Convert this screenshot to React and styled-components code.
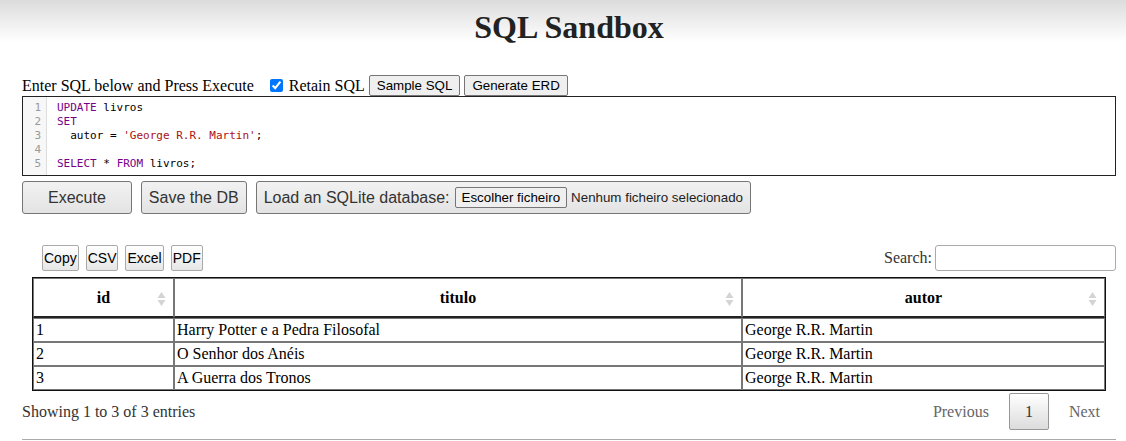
import React from "react";
import styled, { createGlobalStyle } from "styled-components";

const GlobalStyle = createGlobalStyle`
  body {
    margin: 0;
    font-family: "Liberation Serif", "Times New Roman", serif;
    font-size: 16px;
    color: #000;
    background: #fff;
  }
`;

const Header = styled.header`
  height: 52px;
  background: linear-gradient(#dcdcdc, #fff 42px);
  display: flex;
  justify-content: center;
  align-items: flex-start;
  padding-left: 12px;
`;

const Title = styled.h1`
  margin: 9px 0 0;
  font-size: 32px;
  font-weight: bold;
  color: #222;
`;

const Main = styled.main`
  padding: 23px 10px 0 22px;
`;

const IntroBar = styled.div`
  display: flex;
  align-items: center;
  height: 21px;
`;

const Check = styled.input`
  margin: 0 6px 0 16px;
  width: 13px;
  height: 13px;
  accent-color: #0075ff;
`;

const SmallButton = styled.button`
  font-family: "Liberation Sans", Arial, sans-serif;
  font-size: 13.33px;
  height: 21px;
  padding: 0 7px;
  margin-left: ${(p) => p.$gap || 0}px;
  border: 1px solid #767676;
  border-radius: 2px;
  background: #efefef;
  color: #000;
`;

const Editor = styled.div`
  display: flex;
  border: 1px solid #222;
  height: 78px;
  font-family: "DejaVu Sans Mono", monospace;
  font-size: 11px;
  line-height: 14px;
  background: #fff;
`;

const Gutter = styled.div`
  width: 24px;
  background: #f7f7f7;
  border-right: 1px solid #ddd;
  color: #999;
  text-align: right;
  padding: 4px 5px 0 0;
  box-sizing: border-box;
`;

const Code = styled.pre`
  margin: 0;
  padding: 4px 0 0 10px;
  font: inherit;
  color: #000;
`;

const Kw = styled.span`
  color: #708;
`;

const Str = styled.span`
  color: #a11;
`;

const ActionRow = styled.div`
  display: flex;
  gap: 9px;
  margin-top: 5px;
`;

const BigButton = styled.div`
  display: flex;
  align-items: center;
  height: 33px;
  box-sizing: border-box;
  padding: 0 ${(p) => p.$pad}px;
  border: 1px solid #767676;
  border-radius: 3px;
  background: linear-gradient(#f2f2f2, #e3e3e3);
  font-family: "Liberation Sans", Arial, sans-serif;
  font-size: 16px;
  color: #333;
`;

const FileButton = styled.span`
  margin-left: 5px;
  height: 21px;
  box-sizing: border-box;
  display: inline-flex;
  align-items: center;
  padding: 0 6px;
  border: 1px solid #767676;
  border-radius: 2px;
  background: #efefef;
  font-size: 13.33px;
  color: #000;
`;

const FileLabel = styled.span`
  margin-left: 4px;
  font-size: 13.33px;
  color: #222;
`;

const TableArea = styled.section`
  margin-top: 31px;
  padding: 0 10px;
`;

const Toolbar = styled.div`
  display: flex;
  align-items: center;
  justify-content: space-between;
  padding-left: 10px;
  height: 26px;
`;

const ExportGroup = styled.div`
  display: flex;
  gap: 7px;
`;

const ExportButton = styled.button`
  height: 26px;
  padding: 0 1px;
  font-family: "Liberation Sans", Arial, sans-serif;
  font-size: 14px;
  color: #000;
  border: 1px solid #aaa;
  border-radius: 2px;
  background: linear-gradient(#fff, #e6e6e6);
`;

const SearchLabel = styled.label`
  display: flex;
  align-items: center;
  gap: 3px;
  margin-right: -10px;
  color: #333;
`;

const SearchInput = styled.input`
  width: 181px;
  height: 26px;
  box-sizing: border-box;
  border: 1px solid #aaa;
  border-radius: 3px;
  padding: 0 4px;
`;

const Table = styled.table`
  width: 100%;
  table-layout: fixed;
  margin-top: 6px;
  border-collapse: separate;
  border-spacing: 0;
  border: 1px solid #111;
`;

const Th = styled.th`
  position: relative;
  box-sizing: border-box;
  height: 40px;
  padding: 0 18px;
  border: 1px solid #777;
  border-bottom: 2px solid #222;
  font-size: 16px;
  font-weight: bold;
  text-align: center;
  width: ${(p) => (p.$w ? `${p.$w}px` : "auto")};
`;

const SortIcon = styled.svg`
  position: absolute;
  right: 7px;
  top: 12px;
`;

const Td = styled.td`
  height: 22px;
  padding: 0 2px;
  border: 1px solid #777;
  font-size: 16px;
`;

const Footer = styled.div`
  display: flex;
  justify-content: space-between;
  align-items: center;
  margin-top: 2px;
  margin-left: -10px;
  margin-right: -10px;
  padding-bottom: 9px;
  border-bottom: 1px solid #aaa;
`;

const Info = styled.div`
  color: #333;
  padding-top: 1px;
`;

const Pager = styled.div`
  display: flex;
  align-items: center;
  gap: 20px;
  padding-right: 16px;
`;

const PageLink = styled.span`
  color: #666;
`;

const PageCurrent = styled.span`
  display: flex;
  align-items: center;
  justify-content: center;
  width: 40px;
  height: 37px;
  box-sizing: border-box;
  border: 1px solid #979797;
  border-radius: 2px;
  background: linear-gradient(#fff, #dcdcdc);
  color: #333;
`;

function Sort() {
  return (
    <SortIcon width="9" height="16" viewBox="0 0 9 16">
      <path d="M4.5 1 L8.5 7 H0.5 Z" fill="#d4d4d4" />
      <path d="M4.5 15 L8.5 9 H0.5 Z" fill="#d4d4d4" />
    </SortIcon>
  );
}

const rows = [
  ["1", "Harry Potter e a Pedra Filosofal", "George R.R. Martin"],
  ["2", "O Senhor dos Anéis", "George R.R. Martin"],
  ["3", "A Guerra dos Tronos", "George R.R. Martin"],
];

export default function App() {
  return (
    <>
      <GlobalStyle />
      <Header>
        <Title>SQL Sandbox</Title>
      </Header>
      <Main>
        <IntroBar>
          Enter SQL below and Press Execute
          <Check type="checkbox" defaultChecked />
          Retain SQL
          <SmallButton $gap={4}>Sample SQL</SmallButton>
          <SmallButton $gap={4}>Generate ERD</SmallButton>
        </IntroBar>
        <Editor>
          <Gutter>
            <div>1</div>
            <div>2</div>
            <div>3</div>
            <div>4</div>
            <div>5</div>
          </Gutter>
          <Code>
            <Kw>UPDATE</Kw> livros{"\n"}
            <Kw>SET</Kw>{"\n"}
            {"  "}autor = <Str>'George R.R. Martin'</Str>;{"\n"}
            {"\n"}
            <Kw>SELECT</Kw> * <Kw>FROM</Kw> livros;
          </Code>
        </Editor>
        <ActionRow>
          <BigButton $pad={25}>Execute</BigButton>
          <BigButton $pad={7}>Save the DB</BigButton>
          <BigButton $pad={7}>
            Load an SQLite database:
            <FileButton>Escolher ficheiro</FileButton>
            <FileLabel>Nenhum ficheiro selecionado</FileLabel>
          </BigButton>
        </ActionRow>
        <TableArea>
          <Toolbar>
            <ExportGroup>
              <ExportButton>Copy</ExportButton>
              <ExportButton>CSV</ExportButton>
              <ExportButton>Excel</ExportButton>
              <ExportButton>PDF</ExportButton>
            </ExportGroup>
            <SearchLabel>
              Search:
              <SearchInput type="search" />
            </SearchLabel>
          </Toolbar>
          <Table>
            <thead>
              <tr>
                <Th $w={141}>
                  id
                  <Sort />
                </Th>
                <Th $w={568}>
                  titulo
                  <Sort />
                </Th>
                <Th>
                  autor
                  <Sort />
                </Th>
              </tr>
            </thead>
            <tbody>
              {rows.map((r) => (
                <tr key={r[0]}>
                  {r.map((c, i) => (
                    <Td key={i}>{c}</Td>
                  ))}
                </tr>
              ))}
            </tbody>
          </Table>
          <Footer>
            <Info>Showing 1 to 3 of 3 entries</Info>
            <Pager>
              <PageLink>Previous</PageLink>
              <PageCurrent>1</PageCurrent>
              <PageLink>Next</PageLink>
            </Pager>
          </Footer>
        </TableArea>
      </Main>
    </>
  );
}
